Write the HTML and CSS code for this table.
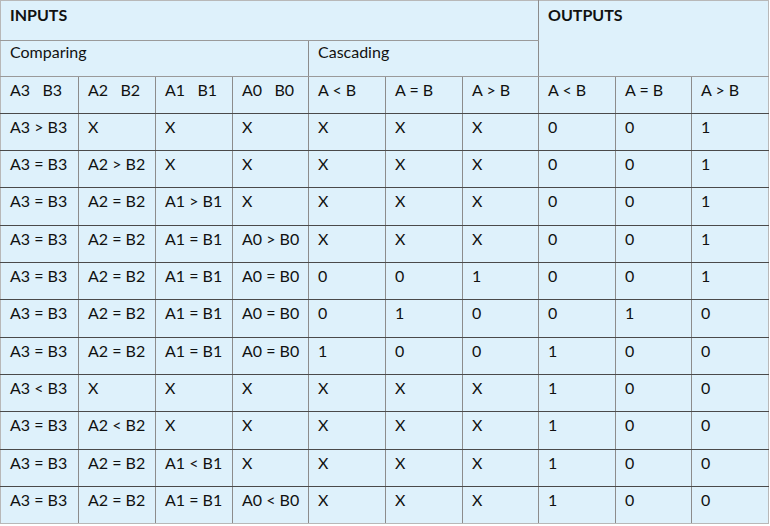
FILE: index.html
```html
<!DOCTYPE html>
<html>
<head>
<meta charset="utf-8">
<link rel="stylesheet" href="styles.css">
</head>
<body>
<table class="truth">
  <colgroup>
    <col class="c78"><col class="c77"><col class="c77"><col class="c76"><col class="c77"><col class="c77"><col class="c76"><col class="c77"><col class="c76"><col class="c77">
  </colgroup>
  <tr class="h1">
    <th colspan="7" class="bold">INPUTS</th>
    <th colspan="3" rowspan="2" class="bold">OUTPUTS</th>
  </tr>
  <tr class="h2">
    <th colspan="4">Comparing</th>
    <th colspan="3">Cascading</th>
  </tr>
  <tr class="h3">
    <th>A3&nbsp;&nbsp;&nbsp;B3</th><th>A2&nbsp;&nbsp;&nbsp;B2</th><th>A1&nbsp;&nbsp;&nbsp;B1</th><th>A0&nbsp;&nbsp;&nbsp;B0</th>
    <th>A &lt; B</th><th>A = B</th><th>A &gt; B</th>
    <th>A &lt; B</th><th>A = B</th><th>A &gt; B</th>
  </tr>
  <tr class="r37"><td>A3 &gt; B3</td><td>X</td><td>X</td><td>X</td><td>X</td><td>X</td><td>X</td><td>0</td><td>0</td><td>1</td></tr>
  <tr class="r37"><td>A3 = B3</td><td>A2 &gt; B2</td><td>X</td><td>X</td><td>X</td><td>X</td><td>X</td><td>0</td><td>0</td><td>1</td></tr>
  <tr class="r38"><td>A3 = B3</td><td>A2 = B2</td><td>A1 &gt; B1</td><td>X</td><td>X</td><td>X</td><td>X</td><td>0</td><td>0</td><td>1</td></tr>
  <tr class="r37"><td>A3 = B3</td><td>A2 = B2</td><td>A1 = B1</td><td>A0 &gt; B0</td><td>X</td><td>X</td><td>X</td><td>0</td><td>0</td><td>1</td></tr>
  <tr class="r37"><td>A3 = B3</td><td>A2 = B2</td><td>A1 = B1</td><td>A0 = B0</td><td>0</td><td>0</td><td>1</td><td>0</td><td>0</td><td>1</td></tr>
  <tr class="r38"><td>A3 = B3</td><td>A2 = B2</td><td>A1 = B1</td><td>A0 = B0</td><td>0</td><td>1</td><td>0</td><td>0</td><td>1</td><td>0</td></tr>
  <tr class="r37"><td>A3 = B3</td><td>A2 = B2</td><td>A1 = B1</td><td>A0 = B0</td><td>1</td><td>0</td><td>0</td><td>1</td><td>0</td><td>0</td></tr>
  <tr class="r37"><td>A3 &lt; B3</td><td>X</td><td>X</td><td>X</td><td>X</td><td>X</td><td>X</td><td>1</td><td>0</td><td>0</td></tr>
  <tr class="r38"><td>A3 = B3</td><td>A2 &lt; B2</td><td>X</td><td>X</td><td>X</td><td>X</td><td>X</td><td>1</td><td>0</td><td>0</td></tr>
  <tr class="r37"><td>A3 = B3</td><td>A2 = B2</td><td>A1 &lt; B1</td><td>X</td><td>X</td><td>X</td><td>X</td><td>1</td><td>0</td><td>0</td></tr>
  <tr class="r37"><td>A3 = B3</td><td>A2 = B2</td><td>A1 = B1</td><td>A0 &lt; B0</td><td>X</td><td>X</td><td>X</td><td>1</td><td>0</td><td>0</td></tr>
</table>
</body>
</html>
```

FILE: styles.css
```css
html, body {
  margin: 0;
  padding: 0;
  background: #ffffff;
}

.truth {
  border-collapse: collapse;
  table-layout: fixed;
  width: 769px;
  background: #def1fb;
  font-family: "Lato", "Open Sans", sans-serif;
  font-size: 16px;
  color: #111111;
  border: 1px solid #b8b8b8;
}

.c78 { width: 78px; }
.c77 { width: 77px; }
.c76 { width: 76px; }

.truth th,
.truth td {
  text-align: left;
  vertical-align: top;
  font-weight: normal;
  padding: 4px 0 0 9px;
  line-height: 18px;
  white-space: nowrap;
  overflow: hidden;
  border-left: 1px solid #8c8c8c;
  border-right: 1px solid #8c8c8c;
  border-top: 1px solid #4a4a4a;
  border-bottom: 1px solid #4a4a4a;
}

.truth th.bold {
  font-weight: bold;
}

.h1 th {
  height: 34px;
  border-top: 1px solid #b8b8b8;
  border-bottom: 1px solid #9a9a9a;
  padding-top: 5px;
}

.h2 th {
  height: 33px;
  padding-top: 2px;
  border-top: 1px solid #9a9a9a;
  border-bottom: 1px solid #9a9a9a;
}

.h3 th {
  height: 32px;
}

.r37 td { height: 32px; }
.r38 td { height: 33px; }

.truth tr:last-child td {
  border-bottom: 1px solid #b8b8b8;
}

.truth tr > :first-child {
  border-left: 1px solid #b8b8b8;
}

.truth tr > :last-child {
  border-right: 1px solid #b8b8b8;
}
```
